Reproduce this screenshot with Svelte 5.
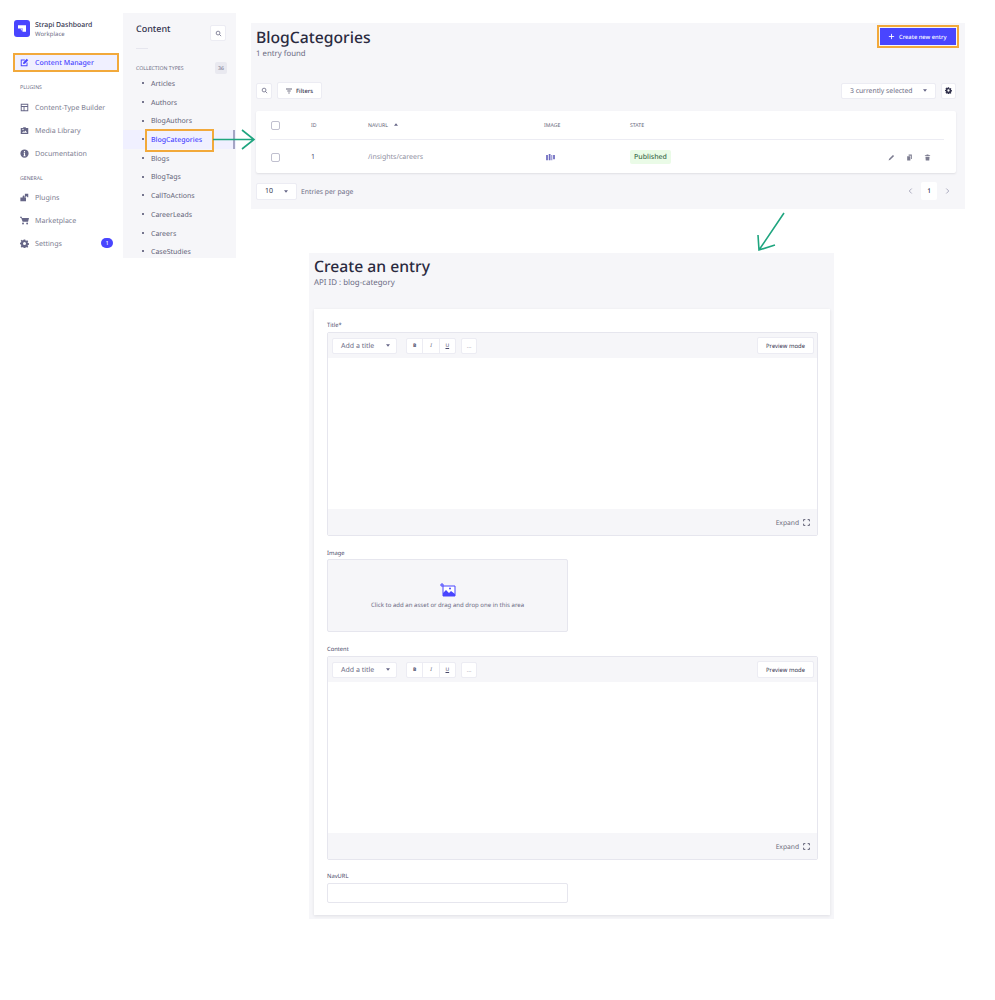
<script>
  const plugins = [
    { label: "Content-Type Builder", icon: "layout" },
    { label: "Media Library", icon: "media" },
    { label: "Documentation", icon: "info" },
  ];
  const general = [
    { label: "Plugins", icon: "puzzle" },
    { label: "Marketplace", icon: "cart" },
    { label: "Settings", icon: "gear", badge: 1 },
  ];
  const types = [
    "Articles",
    "Authors",
    "BlogAuthors",
    "BlogCategories",
    "Blogs",
    "BlogTags",
    "CallToActions",
    "CareerLeads",
    "Careers",
    "CaseStudies",
  ];
  const icons = {
    layout: "M2 2h20v20H2zM4.500 4.500v3.500h15V4.500zM4.500 10.500v9h5v-9zM12 10.500v9h7.500v-9z",
    media: "M2 5h6l1-2h6l1 2h6v16H2zM5 18h14l-4.500-6-3.500 4-2-2zM8 11a1.800 1.800 0 1 0 0-3.600 1.800 1.800 0 0 0 0 3.600z",
    info: "M12 1a11 11 0 1 0 0 22 11 11 0 0 0 0-22zM10.500 5.500h3v3h-3zM9.500 10h4v7h1.500v2H9v-2h1.500v-5h-1z",
    puzzle: "M1 12h6V9a2.500 2.500 0 1 1 5 0v3h4v10H1zM13 2h9v9h-2.500a2.500 2.500 0 0 0-5 0H13z",
    cart: "M0 2h4.500l1 3H24l-2.500 10H7L3 4.500H0zM8 17.500a2.500 2.500 0 1 0 0 5 2.500 2.500 0 0 0 0-5zM19 17.500a2.500 2.500 0 1 0 0 5 2.500 2.500 0 0 0 0-5z",
    gear: "M10 1h4l.6 3 2 .9 2.600-1.700 2.800 2.800-1.700 2.600.9 2 3 .6v4l-3 .6-.9 2 1.700 2.600-2.800 2.800-2.600-1.700-2 .9-.6 3h-4l-.6-3-2-.9-2.600 1.700L1.800 19.200l1.700-2.600-.9-2-3-.6v-4l3-.6.9-2L1.800 4.800 4.600 2 7.200 3.700l2-.9zM12 8a4 4 0 1 0 0 8 4 4 0 0 0 0-8z",
    pencil: "M2 22l2-6L17 3l4 4L8 20z",
    copy: "M9 2h11v15h-3V6H9zM4 8h11v14H4z",
    trash: "M9 2h6l1 2h5v3H3V4h5zM5 9h14l-1 13H6z",
  };
</script>

{#snippet icon(name, cls)}
  <svg class={cls} viewBox="0 0 24 24" fill-rule="evenodd"><path d={icons[name]} /></svg>
{/snippet}

{#snippet search()}
  <svg class="ic-search" viewBox="0 0 24 24"><circle cx="10.500" cy="10.500" r="6.500" /><path d="M15.500 15.500L21 21" /></svg>
{/snippet}

{#snippet caret()}
  <svg class="ic-caret" viewBox="0 0 8 5"><path d="M0 0h8L4 5z" /></svg>
{/snippet}

{#snippet navLink(item)}
  <div class="nav-link">
    {@render icon(item.icon, "nav-icon")}
    <span class="nav-text">{item.label}</span>
    {#if item.badge}<b class="nav-badge">{item.badge}</b>{/if}
  </div>
{/snippet}

{#snippet editor()}
  <div class="editor">
    <div class="editor-bar">
      <div class="btn title-select">Add a title {@render caret()}</div>
      <div class="format-group">
        <span class="b">B</span><span class="i">I</span><span class="u">U</span>
      </div>
      <div class="btn more">…</div>
      <div class="btn preview">Preview mode</div>
    </div>
    <div class="editor-body"></div>
    <div class="editor-foot">
      Expand
      <svg class="ic-expand" viewBox="0 0 24 24"><path d="M2 8V2h6M16 2h6v6M22 16v6h-6M8 22H2v-6" /></svg>
    </div>
  </div>
{/snippet}

<div class="page">
  <div class="top">
    <aside class="sidebar">
      <div class="brand">
        <div class="logo">
          <svg viewBox="0 0 24 24"><path d="M6 7h12v10h-5v-5H6z" fill="#fff" /><path d="M9 12h4v5z" fill="#c9c9ff" /></svg>
        </div>
        <div>
          <div class="brand-name">Strapi Dashboard</div>
          <div class="brand-sub">Workplace</div>
        </div>
      </div>
      <div class="nav-current">
        <svg class="nav-icon" viewBox="0 0 24 24"><path d="M2 4h11v2.500H4.500v13h13V12H20v10H2z" /><path d="M8 16l1-5 9-9 4 4-9 9z" /></svg>
        <span class="nav-text">Content Manager</span>
      </div>
      <div class="nav-label first">PLUGINS</div>
      {#each plugins as item}
        {@render navLink(item)}
      {/each}
      <div class="nav-label second">GENERAL</div>
      {#each general as item}
        {@render navLink(item)}
      {/each}
    </aside>

    <nav class="content-nav">
      <div class="content-head">
        <span>Content</span>
        <div class="btn square">{@render search()}</div>
      </div>
      <div class="content-rule"></div>
      <div class="types-head"><span>COLLECTION TYPES</span><b>36</b></div>
      <ul>
        {#each types as t}
          <li class:active={t === "BlogCategories"}><span>{t}</span></li>
        {/each}
      </ul>
    </nav>

    <section class="list">
      <div class="list-head">
        <div>
          <h1>BlogCategories</h1>
          <p>1 entry found</p>
        </div>
        <div class="create">
          <svg viewBox="0 0 24 24"><path d="M12 3v18M3 12h18" /></svg>
          Create new entry
        </div>
      </div>
      <div class="toolbar">
        <div class="btn square">{@render search()}</div>
        <div class="btn filters">
          <svg viewBox="0 0 24 24"><path d="M3 6h18M7 12h10M10 18h4" /></svg>
          Filters
        </div>
        <div class="btn selected">3 currently selected {@render caret()}</div>
        <div class="btn square gear">{@render icon("gear", "gear-icon")}</div>
      </div>
      <div class="table">
        <div class="row head">
          <span class="check"></span>
          <span>ID</span>
          <span>NAVURL <svg class="ic-caret up" viewBox="0 0 8 5"><path d="M0 5h8L4 0z" /></svg></span>
          <span>IMAGE</span>
          <span>STATE</span>
          <span></span>
        </div>
        <div class="row body">
          <span class="check"></span>
          <span class="id">1</span>
          <span class="url">/insights/careers</span>
          <span>
            <svg class="thumb" viewBox="0 0 10 8"><path d="M0 1h2v6H0zM3 0h2v7H3zM6 1h1v6H6zM8 1h2v5H8z" /></svg>
          </span>
          <span><span class="published">Published</span></span>
          <span class="actions">
            {@render icon("pencil", "act")}
            {@render icon("copy", "act")}
            {@render icon("trash", "act")}
          </span>
        </div>
      </div>
      <div class="list-foot">
        <div class="btn per-page">10 {@render caret()}</div>
        <span class="per-label">Entries per page</span>
        <div class="pager">
          <svg viewBox="0 0 8 12"><path d="M6 2L2 6l4 4" /></svg>
          <b>1</b>
          <svg viewBox="0 0 8 12"><path d="M2 2l4 4-4 4" /></svg>
        </div>
      </div>
    </section>
  </div>

  <section class="create-panel">
    <h2>Create an entry</h2>
    <p>API ID : blog-category</p>
    <div class="card">
      <div class="label">Title*</div>
      {@render editor()}
      <div class="label gap tight">Image</div>
      <div class="drop">
        <svg viewBox="0 0 16 14">
          <path d="M3 3h12v10H3z" fill="#fff" stroke="#4945ff" stroke-width="1" />
          <path d="M3 13V10l3-3 3 3 2-2 4 3v2z" fill="#4945ff" />
          <circle cx="10" cy="5.500" r="1" fill="#4945ff" />
          <path d="M2 0v4M0 2h4" stroke="#4945ff" stroke-width="1" fill="none" />
        </svg>
        <span>Click to add an asset or drag and drop one in this area</span>
      </div>
      <div class="label gap">Content</div>
      {@render editor()}
      <div class="label gap-url">NavURL</div>
      <div class="input"></div>
    </div>
  </section>

  <!-- annotation arrows sit over the screenshots -->
  <svg class="arrow" viewBox="0 0 995 300" fill="none">
    <path class="active-bar" d="M234 130v19" />
    <path class="teal" d="M213 139.500h40M242 130l12 9.500-12 9.500" />
    <path class="teal" d="M784 213l-25 37M758 235l1 15 16-5" />
  </svg>
</div>

<style>
  :global(body) {
    margin: 0;
    background: #fff;
  }
  .page {
    position: relative;
    width: 995px;
    height: 1000px;
    overflow: hidden;
    font-family: "Noto Sans", "Open Sans", sans-serif;
    text-rendering: geometricPrecision;
    color: #32324d;
  }
  .top {
    display: flex;
    align-items: flex-start;
    height: 253px;
  }
  .btn {
    display: flex;
    align-items: center;
    box-sizing: border-box;
    background: #fff;
    border: 1px solid #ececf3;
    border-radius: 2px;
    color: #32324d;
  }
  .square {
    justify-content: center;
    width: 16px;
    height: 16px;
  }
  .ic-search {
    width: 7px;
    height: 7px;
    fill: none;
    stroke: #4a4a6a;
    stroke-width: 2.200;
  }
  .ic-caret {
    width: 4px;
    height: 3px;
    fill: #666687;
  }
  .ic-caret.up {
    margin-left: 5px;
    vertical-align: 1px;
  }

  /* main sidebar */
  .sidebar {
    box-sizing: border-box;
    width: 123px;
    padding: 20px 10px 0 14px;
    flex: none;
  }
  .brand {
    display: flex;
    gap: 5px;
    height: 17px;
  }
  .logo {
    width: 16px;
    height: 17px;
    border-radius: 3px;
    background: #4945ff;
  }
  .logo svg {
    display: block;
    width: 16px;
    height: 17px;
  }
  .brand-name {
    margin-top: 1.500px;
    font-size: 6.900px;
    line-height: 8.500px;
    font-weight: 500;
  }
  .brand-sub {
    font-size: 6px;
    line-height: 8px;
    color: #6c6c84;
  }
  .nav-text {
    margin-top: 2px;
  }
  .nav-current {
    display: flex;
    align-items: center;
    gap: 6px;
    box-sizing: border-box;
    width: 104px;
    height: 17px;
    margin-top: 17px;
    padding-left: 6px;
    background: #f0f0ff;
    outline: 2px solid #f2a93b;
    outline-offset: -1px;
    font-size: 7px;
    font-weight: 500;
    color: #4945ff;
  }
  .nav-current .nav-icon {
    fill: #4945ff;
  }
  .nav-label {
    height: 8px;
    padding-left: 6px;
    font-size: 5.200px;
    line-height: 8px;
    color: #6c6c84;
  }
  .nav-label.first {
    margin: 12px 0 4.500px;
  }
  .nav-label.second {
    margin: 9.500px 0 3.500px;
  }
  .nav-link {
    display: flex;
    align-items: center;
    gap: 6px;
    height: 23px;
    padding-left: 6px;
    font-size: 7.100px;
    color: #7c7c90;
  }
  .nav-icon {
    flex: none;
    width: 9px;
    height: 9px;
    fill: #666687;
  }
  .nav-badge {
    margin-left: auto;
    display: flex;
    align-items: center;
    justify-content: center;
    width: 12px;
    height: 10px;
    border-radius: 5px;
    background: #4945ff;
    color: #fff;
    font-size: 5.500px;
    font-weight: 500;
  }

  /* content types */
  .content-nav {
    box-sizing: border-box;
    flex: none;
    width: 113px;
    height: 245px;
    margin-top: 13px;
    background: #f6f6f9;
    overflow: hidden;
  }
  .content-head {
    display: flex;
    justify-content: space-between;
    align-items: flex-start;
    padding: 10px 10px 0 13px;
    font-size: 9px;
    line-height: 12px;
    font-weight: 500;
  }
  .content-head .btn {
    margin-top: 2px;
  }
  .content-rule {
    width: 12px;
    height: 1px;
    margin: 7px 0 0 13px;
    background: #e6e6ee;
  }
  .types-head {
    display: flex;
    justify-content: space-between;
    align-items: center;
    height: 10px;
    margin-top: 14px;
    padding: 0 9px 0 13px;
    font-size: 5.200px;
    color: #6c6c84;
  }
  .types-head b {
    padding: 2px 3px;
    border-radius: 2px;
    background: #e9e9f0;
    font-weight: 400;
  }
  .content-nav ul {
    list-style: none;
    margin: 1px 0 0;
    padding: 0;
  }
  .content-nav li {
    position: relative;
    height: 18.700px;
    padding-left: 28px;
    font-size: 7px;
    line-height: 22px;
    color: #5f5f76;
  }
  .content-nav li::before {
    content: "";
    position: absolute;
    left: 19px;
    top: 8.200px;
    width: 2px;
    height: 2px;
    border-radius: 50%;
    background: #4a4a6a;
  }
  .content-nav li.active {
    background: #f0f0ff;
    color: #4945ff;
    font-weight: 500;
  }
  .content-nav li.active span {
    display: inline-block;
    width: 67px;
    box-sizing: border-box;
    height: 21px;
    line-height: 22px;
    margin-left: -5px;
    padding-left: 5px;
    outline: 2px solid #f2a93b;
    outline-offset: -1px;
  }

  /* list view */
  .list {
    box-sizing: border-box;
    flex: none;
    width: 714px;
    height: 186px;
    margin: 23px 0 0 15px;
    padding: 4px 9px 0 5px;
    background: #f6f6f9;
  }
  .list-head {
    display: flex;
    justify-content: space-between;
    align-items: flex-start;
  }
  h1 {
    margin: 0;
    font-size: 15.700px;
    line-height: 20px;
    font-weight: 500;
    color: #2a2a40;
  }
  .list-head p {
    margin: 0;
    padding-top: 1px;
    height: 11px;
    font-size: 7.800px;
    line-height: 12px;
    color: #6c6c84;
  }
  .create {
    display: flex;
    align-items: center;
    gap: 4px;
    box-sizing: border-box;
    width: 76px;
    height: 17px;
    margin: 1px 0 0;
    padding-left: 8px;
    background: #4945ff;
    outline: 2px solid #f2a93b;
    outline-offset: 1px;
    color: #fff;
    font-size: 5.800px;
    font-weight: 500;
  }
  .create svg {
    width: 7px;
    height: 7px;
    fill: none;
    stroke: #fff;
    stroke-width: 3;
  }
  .toolbar {
    display: flex;
    align-items: center;
    gap: 5px;
    margin-top: 23px;
    height: 17px;
  }
  .filters {
    gap: 3px;
    width: 45px;
    height: 17px;
    padding-left: 7px;
    font-size: 5.800px;
    font-weight: 500;
  }
  .filters svg {
    width: 8px;
    height: 8px;
    fill: none;
    stroke: #32324d;
    stroke-width: 2.200;
  }
  .selected {
    justify-content: space-between;
    width: 95px;
    height: 16px;
    margin-left: auto;
    padding: 0 8px;
    font-size: 6.800px;
    color: #6c6c84;
  }
  .gear {
    width: 15px;
  }
  .gear-icon {
    width: 7px;
    height: 7px;
    fill: #32324d;
  }
  .table {
    height: 62px;
    margin-top: 12px;
    border-radius: 2px;
    background: #fff;
    box-shadow: 0 1px 2px rgba(33, 33, 52, 0.1);
  }
  .row {
    display: grid;
    grid-template-columns: 41px 57px 176px 86px 1fr auto;
    align-items: center;
    margin: 0 12px 0 14px;
  }
  .row.head {
    height: 28px;
    border-bottom: 1px solid #ececf3;
    font-size: 5.200px;
    color: #5f5f76;
  }
  .row.body {
    height: 33px;
    padding-top: 1px;
    box-sizing: border-box;
    font-size: 7px;
    color: #6c6c84;
  }
  .check {
    box-sizing: border-box;
    width: 9px;
    height: 9px;
    margin-left: 1px;
    border: 1px solid #c0c0cf;
    border-radius: 2px;
  }
  .id {
    color: #4a4a6a;
  }
  .url {
    color: #8e8ea0;
  }
  .thumb {
    display: block;
    width: 9px;
    height: 7px;
    margin-left: 2px;
    fill: #6f6cc0;
  }
  .published {
    display: inline-block;
    width: 41px;
    height: 14px;
    border-radius: 2px;
    background: #eafbe7;
    color: #3d6b4d;
    font-size: 7px;
    line-height: 15px;
    text-align: center;
    font-weight: 500;
  }
  .actions {
    display: flex;
    gap: 11px;
    padding-right: 13px;
  }
  .act {
    width: 7px;
    height: 7px;
    fill: #7c7c90;
  }
  .list-foot {
    display: flex;
    align-items: center;
    height: 18px;
    margin-top: 9px;
  }
  .per-page {
    justify-content: space-between;
    width: 41px;
    height: 17px;
    padding: 0 8px;
    font-size: 7px;
  }
  .per-label {
    margin-left: 4px;
    font-size: 6.800px;
    color: #6c6c84;
  }
  .pager {
    display: flex;
    align-items: center;
    gap: 8px;
    margin-left: auto;
    padding-right: 6px;
  }
  .pager svg {
    width: 5px;
    height: 8px;
    fill: none;
    stroke: #a5a5ba;
    stroke-width: 1.500;
  }
  .pager b {
    width: 16px;
    height: 18px;
    border-radius: 2px;
    background: #fff;
    font-size: 6.500px;
    line-height: 18px;
    text-align: center;
    font-weight: 500;
  }

  /* create form */
  .create-panel {
    box-sizing: border-box;
    width: 525px;
    height: 666px;
    margin-left: 309px;
    padding: 3px 4px 0 5px;
    background: #f6f6f9;
  }
  h2 {
    margin: 0;
    font-size: 15.700px;
    line-height: 21px;
    font-weight: 500;
    color: #2a2a40;
  }
  .create-panel p {
    margin: 0;
    font-size: 7.900px;
    line-height: 12px;
    color: #6c6c84;
  }
  .card {
    box-sizing: border-box;
    width: 516px;
    height: 606px;
    margin-top: 20px;
    padding: 12px 12px 0 13px;
    background: #fff;
    box-shadow: 0 1px 3px rgba(33, 33, 52, 0.1);
  }
  .label {
    height: 8px;
    margin-bottom: 3px;
    font-size: 5.800px;
    line-height: 8px;
    color: #4a4a6a;
  }
  .label.gap {
    margin-top: 13px;
  }
  .label.tight {
    margin-bottom: 2px;
  }
  .label.gap-url {
    margin-top: 12px;
  }
  .editor {
    box-sizing: border-box;
    height: 204px;
    border: 1px solid #e6e6ee;
    border-radius: 2px;
    display: flex;
    flex-direction: column;
  }
  .editor-bar {
    display: flex;
    align-items: center;
    gap: 9px;
    box-sizing: border-box;
    height: 25px;
    padding: 0 3px 0 4px;
    background: #f6f6f9;
  }
  .title-select {
    justify-content: space-between;
    width: 65px;
    height: 16px;
    padding: 2px 6px 0 8px;
    font-size: 7px;
    color: #6c6c84;
  }
  .title-select .ic-caret {
    margin-top: -2px;
  }
  .format-group {
    display: flex;
    box-sizing: border-box;
    width: 50px;
    height: 16px;
    border: 1px solid #ececf3;
    border-radius: 2px;
    background: #fff;
  }
  .format-group span {
    flex: 1;
    border-right: 1px solid #ececf3;
    font-size: 5px;
    line-height: 14px;
    text-align: center;
    color: #4a4a6a;
  }
  .format-group span:last-child {
    border-right: 0;
  }
  .format-group .b {
    font-weight: 700;
  }
  .format-group .i {
    font-style: italic;
  }
  .format-group .u {
    text-decoration: underline;
  }
  .more {
    justify-content: center;
    width: 16px;
    height: 16px;
    margin-left: -4px;
    font-size: 6px;
    color: #8e8ea0;
  }
  .preview {
    justify-content: center;
    width: 57px;
    height: 17px;
    margin-left: auto;
    font-size: 5.900px;
    font-weight: 400;
  }
  .editor-body {
    flex: 1;
    background: #fff;
  }
  .editor-foot {
    display: flex;
    align-items: center;
    justify-content: flex-end;
    gap: 4px;
    height: 26px;
    padding-right: 7px;
    background: #f6f6f9;
    font-size: 6.700px;
    color: #6c6c7c;
  }
  .ic-expand {
    width: 7px;
    height: 7px;
    fill: none;
    stroke: #32324d;
    stroke-width: 2.500;
  }
  .drop {
    display: flex;
    flex-direction: column;
    align-items: center;
    box-sizing: border-box;
    width: 241px;
    height: 73px;
    padding-top: 23px;
    border: 1px solid #e6e6ee;
    border-radius: 2px;
    background: #f6f6f9;
    font-size: 6.050px;
    line-height: 8px;
    color: #6c6c84;
  }
  .drop svg {
    width: 16px;
    height: 14px;
    margin-bottom: 4px;
  }
  .input {
    box-sizing: border-box;
    width: 241px;
    height: 20px;
    border: 1px solid #e6e6ee;
    border-radius: 2px;
  }

  .arrow {
    position: absolute;
    left: 0;
    top: 0;
    width: 995px;
    height: 300px;
    pointer-events: none;
  }
  .teal {
    stroke: #1fa57f;
    stroke-width: 1.600;
  }
  .active-bar {
    stroke: #5a5a8a;
    stroke-width: 1;
  }
</style>
